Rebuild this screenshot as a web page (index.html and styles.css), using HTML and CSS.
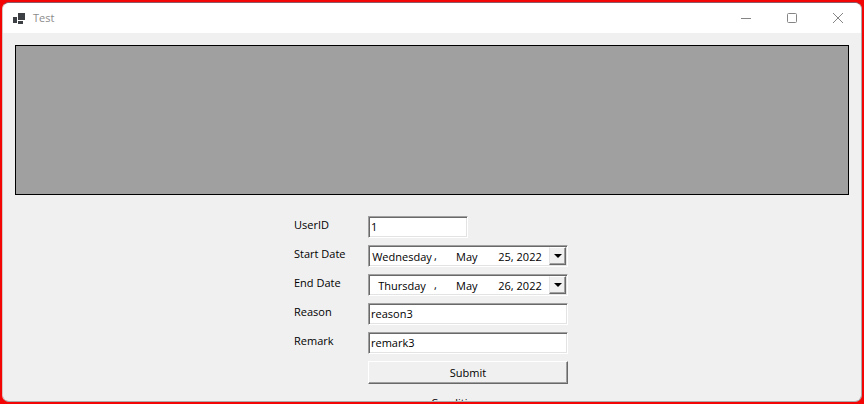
FILE: index.html
```
<!DOCTYPE html>
<html lang="en">
<head>
<meta charset="utf-8">
<title>Test</title>
<link rel="stylesheet" href="styles.css">
</head>
<body>
<div class="window">
  <header class="titlebar">
    <svg class="app-icon" viewBox="0 0 12 11" aria-hidden="true"><path d="M5 0h7v7H5zM0 4h4v6H0zM5 8h5v3H5z" fill="#3c3f43"/></svg>
    <h1 class="title">Test</h1>
    <div class="controls">
      <button type="button" class="control" aria-label="Minimize"><svg viewBox="0 0 12 12"><path d="M1 6.5h10"/></svg></button>
      <button type="button" class="control" aria-label="Maximize"><svg viewBox="0 0 12 12"><rect x="1.5" y="1.5" width="9" height="9" rx="1"/></svg></button>
      <button type="button" class="control" aria-label="Close"><svg viewBox="0 0 12 12"><path d="M1 1l10 10M11 1L1 11"/></svg></button>
    </div>
  </header>
  <main class="content">
    <div class="grid-view"></div>
    <form class="form">
      <label for="user">UserID</label>
      <input class="field short" id="user" type="text" value="1">
      <label for="start">Start Date</label>
      <div class="field date">
        <input class="weekday" id="start" type="text" value="Wednesday"><span class="comma">,</span>
        <input class="month" type="text" aria-label="Start month" value="May">
        <input class="day" type="text" aria-label="Start day and year" value="25, 2022">
        <button type="button" class="drop" aria-label="Open start calendar"><svg viewBox="0 0 8 4"><path d="M0 0h8L4 4z"/></svg></button>
      </div>
      <label for="end">End Date</label>
      <div class="field date">
        <input class="weekday" id="end" type="text" value="Thursday"><span class="comma">,</span>
        <input class="month" type="text" aria-label="End month" value="May">
        <input class="day" type="text" aria-label="End day and year" value="26, 2022">
        <button type="button" class="drop" aria-label="Open end calendar"><svg viewBox="0 0 8 4"><path d="M0 0h8L4 4z"/></svg></button>
      </div>
      <label for="reason">Reason</label>
      <input class="field" id="reason" type="text" value="reason3">
      <label for="remark">Remark</label>
      <input class="field" id="remark" type="text" value="remark3">
      <button type="submit" class="submit">Submit</button>
    </form>
    <p class="caption">Condition</p>
  </main>
</div>
</body>
</html>
```
FILE: styles.css
```
* { box-sizing: border-box; }
body {
  margin: 0;
  height: 100vh;
  padding: 2px;
  background: #f40505;
  color: #000;
  font: 11px/16px "Open Sans", "Noto Sans", sans-serif;
  overflow: hidden;
}
input, button { font: inherit; color: inherit; }
.window {
  height: 100%;
  display: flex;
  flex-direction: column;
  border: 1px solid #aaa;
  border-top-color: #8d5a68;
  border-left-color: #d9c4c4;
  border-radius: 7px;
  background: #f0f0f0;
  overflow: hidden;
}
.titlebar {
  flex: none;
  display: flex;
  align-items: center;
  height: 30px;
  padding-left: 10px;
  background: #fff;
}
.app-icon { width: 12px; height: 11px; }
.title { margin: 0 0 0 8px; font-size: 11px; font-weight: 400; color: #8c8c8c; }
.controls { display: flex; margin-left: auto; }
.control {
  display: grid;
  place-items: center;
  width: 46px;
  height: 30px;
  padding: 0;
  border: 0;
  background: none;
}
.control svg { width: 12px; height: 12px; fill: none; stroke: #858585; }
.content { flex: 1; min-height: 0; padding: 12px; overflow: hidden; }
.grid-view { height: 150px; border: 1px solid #000; background: #a0a0a0; }
.form {
  display: grid;
  grid-template-columns: 74px 200px;
  grid-auto-rows: 22px;
  row-gap: 7px;
  justify-content: center;
  margin-top: 21px;
  padding-right: 2px;
}
.form label { padding-top: 1px; }
.field {
  width: 100%;
  height: 22px;
  padding: 0 2px 2px;
  border: 1px solid;
  border-color: #a0a0a0 #fff #fff #a0a0a0;
  box-shadow: inset 1px 1px #696969, inset -1px -1px #e3e3e3;
  background: #fff;
  outline: 0;
}
.short { width: 100px; }
.date { display: flex; align-items: center; padding: 1px; }
.date input { padding: 0; border: 0; background: none; outline: 0; text-align: center; height: 18px; }
.date .weekday { width: 64px; }
.date .month { width: 28px; margin-left: 16px; }
.date .day { width: 46px; margin-left: auto; }
.drop {
  display: grid;
  place-items: center;
  width: 17px;
  height: 18px;
  margin-left: 6px;
  padding: 0;
  border: 1px solid;
  border-color: #fff #696969 #696969 #e3e3e3;
  box-shadow: inset -1px -1px #a0a0a0;
  background: #f0f0f0;
}
.drop svg { width: 8px; height: 4px; fill: #000; }
.submit {
  grid-column: 2;
  height: 23px;
  padding: 0;
  border: 1px solid;
  border-color: #fff #696969 #696969 #fff;
  box-shadow: inset -1px -1px #a0a0a0;
  background: #f0f0f0;
}
.caption { margin: 12px 0 0; padding-left: 48px; text-align: center; }
```
